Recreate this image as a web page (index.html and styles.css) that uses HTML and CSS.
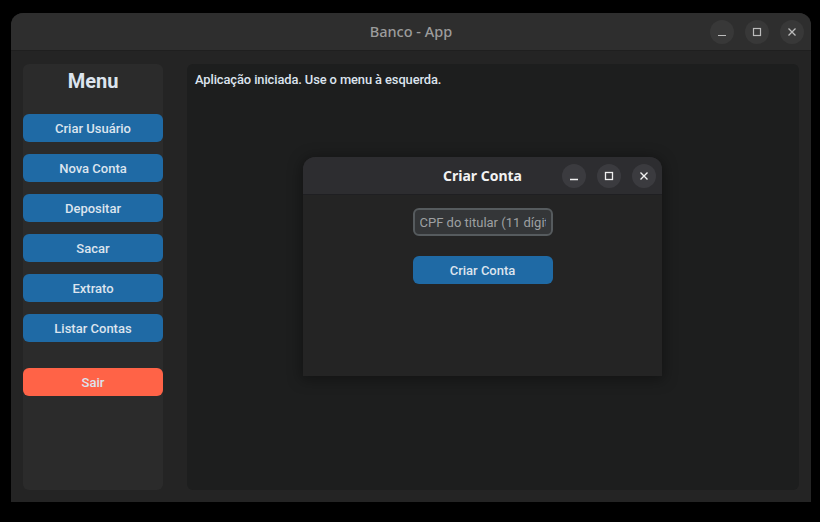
FILE: index.html
```html
<!DOCTYPE html>
<html lang="pt">
<head>
<meta charset="utf-8">
<title>Banco - App</title>
<link rel="stylesheet" href="styles.css">
</head>
<body>
<div class="window">
  <div class="titlebar">
    <span class="title">Banco - App</span>
    <div class="controls">
      <span class="ctl"><svg width="24" height="24" viewBox="0 0 24 24"><path d="M8 15.5h8" stroke="#bcbcbc" stroke-width="1.2"/></svg></span>
      <span class="ctl"><svg width="24" height="24" viewBox="0 0 24 24"><rect x="8.5" y="8.5" width="7" height="7" fill="none" stroke="#bcbcbc" stroke-width="1.2"/></svg></span>
      <span class="ctl"><svg width="24" height="24" viewBox="0 0 24 24"><path d="M8.5 8.5l7 7M15.5 8.5l-7 7" stroke="#bcbcbc" stroke-width="1.3"/></svg></span>
    </div>
  </div>
  <div class="content">
    <aside class="sidebar">
      <h1 class="menu-title">Menu</h1>
      <div class="menu">
        <button class="btn">Criar Usuário</button>
        <button class="btn">Nova Conta</button>
        <button class="btn">Depositar</button>
        <button class="btn">Sacar</button>
        <button class="btn">Extrato</button>
        <button class="btn">Listar Contas</button>
      </div>
      <button class="btn btn-exit">Sair</button>
    </aside>
    <main class="main">
      <p class="status">Aplicação iniciada. Use o menu à esquerda.</p>
      <div class="dialog">
        <div class="dlg-titlebar">
          <span class="dlg-title">Criar Conta</span>
          <div class="controls dlg-controls">
            <span class="ctl dctl"><svg width="24" height="24" viewBox="0 0 24 24"><path d="M8 15.5h8" stroke="#f0f0f0" stroke-width="1.3"/></svg></span>
            <span class="ctl dctl"><svg width="24" height="24" viewBox="0 0 24 24"><rect x="8.5" y="8.5" width="7" height="7" fill="none" stroke="#f0f0f0" stroke-width="1.3"/></svg></span>
            <span class="ctl dctl"><svg width="24" height="24" viewBox="0 0 24 24"><path d="M8.5 8.5l7 7M15.5 8.5l-7 7" stroke="#f0f0f0" stroke-width="1.4"/></svg></span>
          </div>
        </div>
        <div class="dlg-body">
          <input class="entry" type="text" placeholder="CPF do titular (11 dígitos)">
          <button class="btn">Criar Conta</button>
        </div>
      </div>
    </main>
  </div>
</div>
</body>
</html>
```

FILE: styles.css
```css
* { box-sizing: border-box; }
html, body {
  margin: 0;
  padding: 0;
  background: #000;
  width: 820px;
  height: 522px;
  overflow: hidden;
}
body {
  padding: 13px 0 0 11px;
  font-family: Roboto, "Liberation Sans", sans-serif;
}
.window {
  width: 800px;
  height: 489px;
  background: #242424;
  border-radius: 12px 12px 0 0;
  display: flex;
  flex-direction: column;
  overflow: hidden;
}
.titlebar {
  height: 38px;
  flex: none;
  background: #2e2e2e;
  border-bottom: 1px solid #1f1f1f;
  position: relative;
  display: flex;
  align-items: center;
  justify-content: flex-end;
  padding-right: 7px;
}
.title {
  position: absolute;
  left: 0;
  right: 0;
  text-align: center;
  font-family: "Noto Sans", "Open Sans", sans-serif;
  font-size: 14.5px;
  font-weight: 500;
  color: #9c9c9c;
  top: 9px;
  line-height: 18px;
}
.controls {
  display: flex;
  gap: 11px;
  position: relative;
}
.ctl {
  width: 24px;
  height: 24px;
  border-radius: 50%;
  background: #383838;
  display: block;
}
.ctl svg { display: block; }
.content {
  flex: 1;
  display: flex;
  gap: 24px;
  padding: 13px 12px 12px 12px;
}
.sidebar {
  width: 140px;
  background: #2b2b2b;
  border-radius: 6px;
  display: flex;
  flex-direction: column;
}
.menu-title {
  margin: 5px 0 0;
  font-size: 20px;
  line-height: 24px;
  font-weight: 700;
  text-align: center;
  color: #dce4ee;
}
.menu {
  margin-top: 21px;
  display: flex;
  flex-direction: column;
  gap: 12px;
}
.btn {
  width: 140px;
  height: 28px;
  border: none;
  border-radius: 6px;
  background: #1f6aa5;
  color: #dce4ee;
  font-family: Roboto, "Liberation Sans", sans-serif;
  font-size: 13px;
  font-weight: 500;
  padding: 0;
  display: block;
}
.btn-exit {
  margin-top: 26px;
  background: #ff6347;
}
.main {
  flex: 1;
  background: #1d1e1e;
  border-radius: 6px;
  position: relative;
}
.status {
  margin: 0;
  padding: 8px 8px 0;
  font-size: 12.9px;
  line-height: 16px;
  color: #dce4ee;
  font-weight: 500;
  letter-spacing: -0.1px;
}
.dialog {
  position: absolute;
  left: 116px;
  top: 93px;
  width: 359px;
  height: 219px;
  background: #242424;
  border-radius: 12px 12px 0 0;
  box-shadow: 0 2px 14px 2px rgba(0,0,0,0.35);
  display: flex;
  flex-direction: column;
}
.dlg-titlebar {
  height: 38px;
  flex: none;
  background: #2d2d30;
  border-radius: 12px 12px 0 0;
  border-bottom: 1px solid #1f1f22;
  position: relative;
  display: flex;
  align-items: center;
  justify-content: flex-end;
  padding-right: 6px;
}
.dlg-title {
  position: absolute;
  left: 0;
  right: 0;
  text-align: center;
  font-family: "Noto Sans", "Open Sans", sans-serif;
  font-size: 14px;
  font-weight: 700;
  color: #f2f2f2;
  top: 10px;
  line-height: 18px;
}
.dctl { background: #3b3b3f; }
.dlg-body {
  display: flex;
  flex-direction: column;
  align-items: center;
  padding-top: 13px;
  gap: 20px;
}
.entry {
  width: 140px;
  height: 28px;
  border: 2px solid #565b5e;
  border-radius: 6px;
  background: #343638;
  color: #dce4ee;
  font-family: Roboto, "Liberation Sans", sans-serif;
  font-size: 13px;
  padding: 0 5px;
  outline: none;
}
.entry::placeholder { color: #9ea0a2; }
```
